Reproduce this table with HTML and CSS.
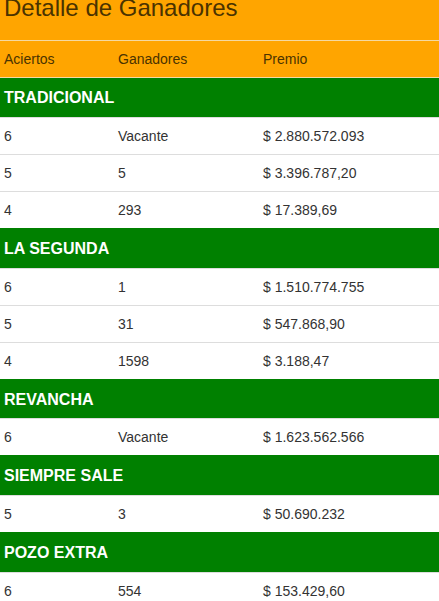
FILE: index.html
```html
<!DOCTYPE html>
<html lang="es">
<head>
<meta charset="utf-8">
<title>Detalle de Ganadores</title>
<link rel="stylesheet" href="styles.css">
</head>
<body>
<div class="panel">
  <div class="panel-head"><h2 class="title">Detalle de Ganadores</h2></div>
  <table class="results">
    <colgroup><col class="c1"><col class="c2"><col class="c3"></colgroup>
    <thead>
      <tr class="head-row"><th>Aciertos</th><th>Ganadores</th><th>Premio</th></tr>
    </thead>
    <tbody>
      <tr class="group"><td colspan="3">TRADICIONAL</td></tr>
      <tr><td>6</td><td>Vacante</td><td>$ 2.880.572.093</td></tr>
      <tr><td>5</td><td>5</td><td>$ 3.396.787,20</td></tr>
      <tr><td>4</td><td>293</td><td>$ 17.389,69</td></tr>
      <tr class="group"><td colspan="3">LA SEGUNDA</td></tr>
      <tr><td>6</td><td>1</td><td>$ 1.510.774.755</td></tr>
      <tr><td>5</td><td>31</td><td>$ 547.868,90</td></tr>
      <tr><td>4</td><td>1598</td><td>$ 3.188,47</td></tr>
      <tr class="group"><td colspan="3">REVANCHA</td></tr>
      <tr><td>6</td><td>Vacante</td><td>$ 1.623.562.566</td></tr>
      <tr class="group"><td colspan="3">SIEMPRE SALE</td></tr>
      <tr><td>5</td><td>3</td><td>$ 50.690.232</td></tr>
      <tr class="group"><td colspan="3">POZO EXTRA</td></tr>
      <tr><td>6</td><td>554</td><td>$ 153.429,60</td></tr>
    </tbody>
  </table>
</div>
</body>
</html>
```
FILE: styles.css
```css
html, body {
  margin: 0;
  padding: 0;
  background: #fff;
  font-family: "Liberation Sans", Arial, Helvetica, sans-serif;
  color: #333;
  overflow: hidden;
}
.panel {
  width: 439px;
}
.panel-head {
  background: #ffa500;
  height: 40px;
  overflow: hidden;
}
.title {
  margin: -5px 0 0 0;
  padding: 0 4px;
  font-size: 24px;
  font-weight: normal;
  line-height: 26px;
  color: #4a3300;
}
.results {
  width: 100%;
  border-collapse: collapse;
  font-size: 14px;
}
.c1 { width: 114px; }
.c2 { width: 145px; }
.results th,
.results td {
  padding: 9px 4px 7px;
  line-height: 1.428571;
  text-align: left;
  border-top: 1px solid #ddd;
}
.head-row th {
  background: #ffa500;
  font-weight: normal;
  color: #4a3300;
  border-top: 1px solid #f5d9a0;
  border-bottom: 1px solid #f5d9a0;
}
.group td {
  background: #008000;
  color: #fff;
  font-weight: bold;
  font-size: 16px;
  border-top: 1px solid #008000;
}
```
